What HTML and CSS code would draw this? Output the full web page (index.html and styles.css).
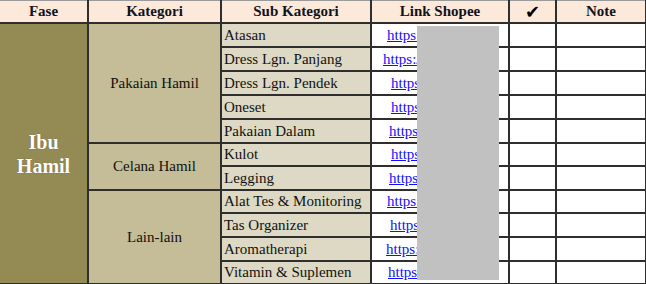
FILE: index.html
```html
<!DOCTYPE html>
<html lang="id">
<head>
<meta charset="utf-8">
<title>Checklist Ibu Hamil</title>
<link rel="stylesheet" href="styles.css">
</head>
<body>
<div class="sheet">
  <table class="grid">
    <colgroup>
      <col class="c-fase"><col class="c-kat"><col class="c-sub"><col class="c-link"><col class="c-check"><col class="c-note">
    </colgroup>
    <thead>
      <tr class="head">
        <th>Fase</th><th>Kategori</th><th>Sub Kategori</th><th>Link Shopee</th><th class="tick">&#10004;</th><th>Note</th>
      </tr>
    </thead>
    <tbody>
      <tr class="r24">
        <td class="fase" rowspan="11">Ibu<br>Hamil</td>
        <td class="kat" rowspan="5">Pakaian Hamil</td>
        <td class="sub">Atasan</td>
        <td class="link p15"><a href="#">https://shopee.co</a></td><td></td><td></td>
      </tr>
      <tr class="r24"><td class="sub">Dress Lgn. Panjang</td><td class="link p11"><a href="#">https://shopee.co</a></td><td></td><td></td></tr>
      <tr class="r24"><td class="sub">Dress Lgn. Pendek</td><td class="link p19"><a href="#">https://shopee.co</a></td><td></td><td></td></tr>
      <tr class="r24"><td class="sub">Oneset</td><td class="link p19"><a href="#">https://shopee.co</a></td><td></td><td></td></tr>
      <tr class="r24"><td class="sub">Pakaian Dalam</td><td class="link p17"><a href="#">https://shopee.co</a></td><td></td><td></td></tr>
      <tr class="r23">
        <td class="kat" rowspan="2">Celana Hamil</td>
        <td class="sub">Kulot</td><td class="link p19"><a href="#">https://shopee.co</a></td><td></td><td></td>
      </tr>
      <tr class="r24"><td class="sub">Legging</td><td class="link p17"><a href="#">https://shopee.co</a></td><td></td><td></td></tr>
      <tr class="r23">
        <td class="kat" rowspan="4">Lain-lain</td>
        <td class="sub">Alat Tes &amp; Monitoring</td><td class="link p15"><a href="#">https://shopee.co</a></td><td></td><td></td>
      </tr>
      <tr class="r24"><td class="sub">Tas Organizer</td><td class="link p18"><a href="#">https://shopee.co</a></td><td></td><td></td></tr>
      <tr class="r24"><td class="sub">Aromatherapi</td><td class="link p14"><a href="#">https://shopee.co</a></td><td></td><td></td></tr>
      <tr class="r23"><td class="sub">Vitamin &amp; Suplemen</td><td class="link p16"><a href="#">https://shopee.co</a></td><td></td><td></td></tr>
    </tbody>
  </table>
  <div class="redact"></div>
</div>
</body>
</html>
```

FILE: styles.css
```css
html, body {
  margin: 0;
  padding: 0;
  background: #ffffff;
}

.sheet {
  position: relative;
  width: 646px;
  height: 284px;
  overflow: hidden;
}

.grid {
  border-collapse: collapse;
  table-layout: fixed;
  width: 646px;
  font-family: "Liberation Serif", "Times New Roman", serif;
  font-size: 15px;
  color: #111;
}

.c-fase { width: 88px; }
.c-kat { width: 133px; }
.c-sub { width: 150px; }
.c-link { width: 138px; }
.c-check { width: 47px; }
.c-note { width: 90px; }

.grid th,
.grid td {
  border: 2px solid #2e2e2e;
  padding: 0;
  overflow: hidden;
  white-space: nowrap;
  vertical-align: middle;
}

.grid tr > :first-child {
  border-left: 0;
}

.head th {
  height: 21px;
  background: #fde9d9;
  font-weight: bold;
  text-align: center;
  border-top: 1px solid #9a9a9a;
  color: #10131c;
}

.head .tick {
  font-family: "DejaVu Sans", sans-serif;
  font-size: 18px;
  line-height: 18px;
  color: #000;
}

.r24 td { height: 22px; }
.r23 td { height: 21px; }

.fase {
  background: #948a54;
  color: #ffffff;
  font-weight: bold;
  font-size: 20px;
  line-height: 24px;
  text-align: center;
  text-shadow: 0 0 1px rgba(0, 0, 0, 0.35);
}

.kat {
  background: #c4bd97;
  text-align: center;
}

.sub {
  background: #ddd9c4;
  padding-left: 2px !important;
}

.link a {
  color: #1010ff;
  text-decoration: underline;
}

.p11 { padding-left: 11px !important; }
.p14 { padding-left: 14px !important; }
.p15 { padding-left: 15px !important; }
.p16 { padding-left: 16px !important; }
.p17 { padding-left: 17px !important; }
.p18 { padding-left: 18px !important; }
.p19 { padding-left: 19px !important; }

.redact {
  position: absolute;
  left: 417px;
  top: 26px;
  width: 82px;
  height: 254px;
  background: #c1c1c1;
}
```
